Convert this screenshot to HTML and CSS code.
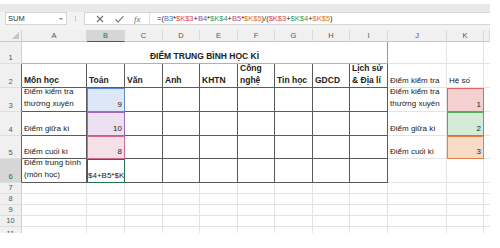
FILE: index.html
```html
<!DOCTYPE html>
<html>
<head>
<meta charset="utf-8">
<link rel="stylesheet" href="styles.css">
</head>
<body>
<div class="app">
  <div class="strip"></div>
  <div class="fbar">
    <div class="namebox"><span>SUM</span><span class="dd"></span></div>
    <div class="grip"><i></i><i></i><i></i></div>
    <div class="fbox">
      <div class="btns">
        <svg class="ico" width="10" height="10" viewBox="0 0 10 10"><path d="M2 2 L8 8 M8 2 L2 8" stroke="#6f6f6f" stroke-width="1.1" fill="none"/></svg>
        <svg class="ico" width="11" height="10" viewBox="0 0 11 10"><path d="M1.5 5.5 L4.2 8 L9.5 2" stroke="#6f6f6f" stroke-width="1.1" fill="none"/></svg>
        <span class="fx">fx</span>
      </div>
      <div class="ftext">=(<span class="k1">B3</span>*<span class="k2">$K$3</span>+<span class="k3">B4</span>*<span class="k4">$K$4</span>+<span class="k5">B5</span>*<span class="k6">$K$5</span>)/(<span class="k2">$K$3</span>+<span class="k4">$K$4</span>+<span class="k6">$K$5</span>)</div>
    </div>
  </div>
  <div class="gap"></div>
  <div class="sheet">
    <!-- header row -->
    <div class="corner"><span class="tri"></span></div>
    <div class="ch">A</div><div class="ch sel">B</div><div class="ch">C</div><div class="ch">D</div><div class="ch">E</div><div class="ch">F</div><div class="ch">G</div><div class="ch">H</div><div class="ch">I</div><div class="ch">J</div><div class="ch">K</div><div class="ch last"></div>

    <!-- row 1 -->
    <div class="rh">1</div>
    <div class="c title span9">ĐIỂM TRUNG BÌNH HỌC KÌ</div>
    <div class="c"></div><div class="c"></div><div class="c last"></div>

    <!-- row 2 -->
    <div class="rh dk">2</div>
    <div class="c b dr db">Môn học</div>
    <div class="c b dr db">Toán</div>
    <div class="c b dr db">Văn</div>
    <div class="c b dr db">Anh</div>
    <div class="c b dr db">KHTN</div>
    <div class="c b w dr db">Công nghệ</div>
    <div class="c b dr db">Tin học</div>
    <div class="c b dr db">GDCD</div>
    <div class="c b w dr db">Lịch sử &amp; Địa lí</div>
    <div class="c">Điểm kiểm tra</div>
    <div class="c">Hệ số</div>
    <div class="c last"></div>

    <!-- row 3 -->
    <div class="rh dk">3</div>
    <div class="c w dr db">Điểm kiểm tra thường xuyên</div>
    <div class="c r dr db f1">9</div>
    <div class="c dr db"></div><div class="c dr db"></div><div class="c dr db"></div><div class="c dr db"></div><div class="c dr db"></div><div class="c dr db"></div><div class="c dr db"></div>
    <div class="c w">Điểm kiểm tra thường xuyên</div>
    <div class="c r f2">1</div>
    <div class="c last"></div>

    <!-- row 4 -->
    <div class="rh dk">4</div>
    <div class="c dr db">Điểm giữa kì</div>
    <div class="c r dr db f3">10</div>
    <div class="c dr db"></div><div class="c dr db"></div><div class="c dr db"></div><div class="c dr db"></div><div class="c dr db"></div><div class="c dr db"></div><div class="c dr db"></div>
    <div class="c">Điểm giữa kì</div>
    <div class="c r f4">2</div>
    <div class="c last"></div>

    <!-- row 5 -->
    <div class="rh dk">5</div>
    <div class="c dr db">Điểm cuối kì</div>
    <div class="c r dr db f5">8</div>
    <div class="c dr db"></div><div class="c dr db"></div><div class="c dr db"></div><div class="c dr db"></div><div class="c dr db"></div><div class="c dr db"></div><div class="c dr db"></div>
    <div class="c">Điểm cuối kì</div>
    <div class="c r f6">3</div>
    <div class="c last"></div>

    <!-- row 6 -->
    <div class="rh dk sel">6</div>
    <div class="c w dr db">Điểm trung bình (môn học)</div>
    <div class="c dr db act">$4+B5*$K</div>
    <div class="c dr db"></div><div class="c dr db"></div><div class="c dr db"></div><div class="c dr db"></div><div class="c dr db"></div><div class="c dr db"></div><div class="c dr db"></div>
    <div class="c"></div><div class="c"></div><div class="c last"></div>

    <!-- rows 7-11 -->
    <div class="rh">7</div><div class="c"></div><div class="c"></div><div class="c"></div><div class="c"></div><div class="c"></div><div class="c"></div><div class="c"></div><div class="c"></div><div class="c"></div><div class="c"></div><div class="c"></div><div class="c last"></div>
    <div class="rh">8</div><div class="c"></div><div class="c"></div><div class="c"></div><div class="c"></div><div class="c"></div><div class="c"></div><div class="c"></div><div class="c"></div><div class="c"></div><div class="c"></div><div class="c"></div><div class="c last"></div>
    <div class="rh">9</div><div class="c"></div><div class="c"></div><div class="c"></div><div class="c"></div><div class="c"></div><div class="c"></div><div class="c"></div><div class="c"></div><div class="c"></div><div class="c"></div><div class="c"></div><div class="c last"></div>
    <div class="rh">10</div><div class="c"></div><div class="c"></div><div class="c"></div><div class="c"></div><div class="c"></div><div class="c"></div><div class="c"></div><div class="c"></div><div class="c"></div><div class="c"></div><div class="c"></div><div class="c last"></div>
    <div class="rh cut">11</div><div class="c nb"></div><div class="c nb"></div><div class="c nb"></div><div class="c nb"></div><div class="c nb"></div><div class="c nb"></div><div class="c nb"></div><div class="c nb"></div><div class="c nb"></div><div class="c nb"></div><div class="c nb"></div><div class="c nb last"></div>
  </div>
</div>
</body>
</html>
```

FILE: styles.css
```css
* { box-sizing: border-box; margin: 0; padding: 0; }
html, body { background: #fff; }
body {
  font-family: "Liberation Sans", Arial, sans-serif;
  font-size: 8px;
  color: #222;
}
.app {
  width: 490px;
  padding-top: 4px;
  background: #fff;
}
.strip { height: 8px; background: #e9e9e9; }
.fbar {
  height: 13px;
  display: flex;
  background: #f3f3f3;
  padding-left: 5px;
}
.namebox {
  width: 62px;
  height: 13px;
  background: #fff;
  border: 1px solid #d6d6d6;
  display: flex;
  align-items: center;
  justify-content: space-between;
  padding: 0 3px 0 2px;
  font-size: 7.5px;
  color: #333;
}
.dd {
  width: 0; height: 0;
  border-left: 2px solid transparent;
  border-right: 2px solid transparent;
  border-top: 2px solid #888;
}
.grip {
  width: 17px;
  display: flex;
  flex-direction: column;
  align-items: center;
  justify-content: center;
  gap: 1px;
}
.grip i { display: block; width: 1px; height: 1px; background: #aaa; }
.fbox {
  flex: 1;
  display: flex;
  background: #fff;
  border: 1px solid #d6d6d6;
  border-right: none;
  height: 13px;
}
.btns {
  width: 65px;
  display: flex;
  align-items: center;
  justify-content: space-around;
  padding: 0 4px 0 6px;
  border-right: 1px solid #dcdcdc;
}
.ico { display: block; }
.fx {
  font-family: "Liberation Serif", serif;
  font-style: italic;
  font-size: 9px;
  color: #6f6f6f;
}
.ftext {
  padding-left: 7px;
  font-size: 7.5px;
  line-height: 11px;
  color: #222;
  white-space: nowrap;
}
.k1 { color: #3d6fd0; }
.k2 { color: #e0434b; }
.k3 { color: #8e44b0; }
.k4 { color: #2f9a57; }
.k5 { color: #c4457f; }
.k6 { color: #e0702a; }
.gap { height: 5px; background: #f3f3f3; }

.sheet {
  display: grid;
  grid-template-columns: 22px 65px 38px 38px 37px 38px 37px 38px 37px 38px 59px 37px 6px;
  grid-template-rows: 12px 22px 24px 24px 24px 23px 24px 11px 11px 11px 11px 6px;
  height: 203px;
  overflow: hidden;
}
.corner {
  background: #f0f0f0;
  border-right: 1px solid #d4d4d4;
  border-bottom: 1px solid #c8c8c8;
  position: relative;
}
.tri {
  position: absolute;
  right: 2px; bottom: 2px;
  width: 0; height: 0;
  border-left: 7px solid transparent;
  border-bottom: 7px solid #c4c4c4;
}
.ch {
  background: #f0f0f0;
  border-right: 1px solid #d8d8d8;
  border-bottom: 1px solid #c8c8c8;
  color: #555;
  font-size: 7.5px;
  display: flex;
  align-items: center;
  justify-content: center;
}
.ch.sel {
  background: #d6d6d6;
  color: #217346;
  border-bottom: 1px solid #217346;
}
.rh {
  background: #f0f0f0;
  border-right: 1px solid #d0d0d0;
  border-bottom: 1px solid #dedede;
  color: #555;
  font-size: 7.5px;
  display: flex;
  align-items: flex-end;
  justify-content: center;
  padding-bottom: 1px;
  overflow: hidden;
  line-height: 9px;
}
.rh.cut {
  align-items: flex-start;
  padding: 2px 0 0 0;
  border-bottom: none;
}
.rh.dk { border-right-color: #666; }
.rh.sel {
  background: #d6d6d6;
  color: #217346;
  border-right: 1px solid #217346;
}
.c {
  border-right: 1px solid #e3e3e3;
  border-bottom: 1px solid #e3e3e3;
  display: flex;
  align-items: flex-end;
  padding: 0 2px 1px 2px;
  white-space: nowrap;
  overflow: hidden;
  line-height: 11px;
}
.c.last { border-right: none; }
.c.nb { border-bottom: none; }
.w { white-space: normal; line-height: 12px; }
.b { font-weight: bold; font-size: 8.5px; }
.r { justify-content: flex-end; }
.dr { border-right-color: #5a5a5a; }
.db { border-bottom-color: #5a5a5a; }
.title {
  grid-column: span 9;
  justify-content: center;
  font-weight: bold;
  font-size: 8.5px;
  border-right-color: #9a9a9a;
  border-bottom-color: #b0b0b0;
}
.f1 { background: #dde7f6; outline: 1px solid #5a8ad8; outline-offset: -1px; }
.f2 { background: #f5d0d1; outline: 1px solid #e06466; outline-offset: -1px; }
.f3 { background: #ece0f1; outline: 1px solid #a066c2; outline-offset: -1px; }
.f4 { background: #d4ebd8; outline: 1px solid #55ab62; outline-offset: -1px; }
.f5 { background: #f6e0e8; outline: 1px solid #d36a95; outline-offset: -1px; }
.f6 { background: #f8dac7; outline: 1px solid #e38244; outline-offset: -1px; }
.act {
  outline: 1px solid #217346;
  outline-offset: -1px;
  padding-left: 1px;
}
```
